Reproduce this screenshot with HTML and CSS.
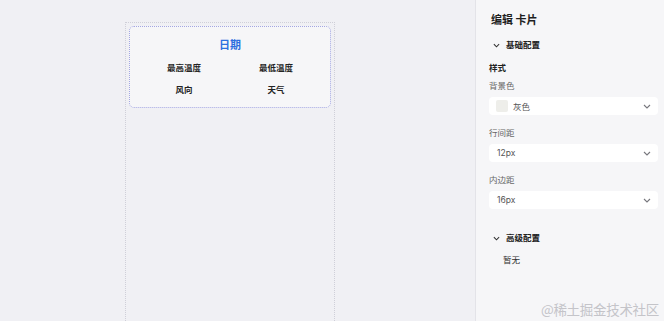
FILE: index.html
```html
<!DOCTYPE html>
<html lang="zh">
<head>
<meta charset="utf-8">
<link rel="stylesheet" href="styles.css">
</head>
<body>
<div class="page">
  <main class="stage">
    <div class="canvas">
      <div class="card">
        <div class="card-title">日期</div>
        <div class="card-grid">
          <span>最高温度</span>
          <span>最低温度</span>
          <span>风向</span>
          <span>天气</span>
        </div>
      </div>
    </div>
  </main>
  <aside class="panel">
    <h1 class="panel-title">编辑 卡片</h1>
    <div class="section-head">
      <svg class="chev" viewBox="0 0 8 5" width="7" height="5"><path d="M1 1 L4 4 L7 1" fill="none" stroke="#333" stroke-width="1.2"/></svg>
      <span>基础配置</span>
    </div>
    <div class="group-title">样式</div>
    <div class="field">
      <div class="label">背景色</div>
      <div class="select"><span class="swatch"></span><span class="value">灰色</span><svg class="sel-chev" viewBox="0 0 8 5" width="8" height="5"><path d="M1 1 L4 4 L7 1" fill="none" stroke="#77777d" stroke-width="1.1"/></svg></div>
    </div>
    <div class="field">
      <div class="label">行间距</div>
      <div class="select"><span class="value">12px</span><svg class="sel-chev" viewBox="0 0 8 5" width="8" height="5"><path d="M1 1 L4 4 L7 1" fill="none" stroke="#77777d" stroke-width="1.1"/></svg></div>
    </div>
    <div class="field">
      <div class="label">内边距</div>
      <div class="select"><span class="value">16px</span><svg class="sel-chev" viewBox="0 0 8 5" width="8" height="5"><path d="M1 1 L4 4 L7 1" fill="none" stroke="#77777d" stroke-width="1.1"/></svg></div>
    </div>
    <div class="section-head adv">
      <svg class="chev" viewBox="0 0 8 5" width="7" height="5"><path d="M1 1 L4 4 L7 1" fill="none" stroke="#333" stroke-width="1.2"/></svg>
      <span>高级配置</span>
    </div>
    <div class="empty">暂无</div>
  </aside>
  <div class="watermark">@稀土掘金技术社区</div>
</div>
</body>
</html>
```
FILE: styles.css
```css
* { box-sizing: border-box; margin: 0; padding: 0; }
html, body { width: 664px; height: 321px; overflow: hidden; }
body {
  background: #f0f0f4;
  font-family: "Inter", "Noto Sans CJK SC", sans-serif;
  color: #222;
}
.page {
  position: relative;
  display: flex;
  height: 321px;
  overflow: hidden;
}
.stage {
  flex: 1;
  padding: 22px 0 0 125px;
}
.canvas {
  width: 210px;
  height: 299px;
  border: 1px dotted #cfcfd8;
  border-bottom: none;
  padding: 3px 3px 0 3px;
}
.card {
  height: 82px;
  border: 1px dotted #a3a6e2;
  border-radius: 5px;
  background: #f6f6f8;
  padding: 11px 0 0 0;
  display: flex;
  flex-direction: column;
  align-items: center;
}
.card-title {
  font-size: 11px;
  line-height: 14px;
  font-weight: 700;
  color: #2d6fe0;
}
.card-grid {
  margin-top: 10px;
  display: grid;
  grid-template-columns: 92px 92px;
  row-gap: 10px;
  justify-items: center;
  font-size: 8.5px;
  line-height: 12px;
  font-weight: 700;
  color: #222;
}
.panel {
  width: 189px;
  flex: none;
  background: #f6f6f8;
  border-left: 1px solid #e3e3e8;
  padding: 12px 6px 0 13px;
}
.panel-title {
  margin-left: 2px;
  font-size: 11px;
  line-height: 16px;
  font-weight: 700;
  color: #1f1f1f;
}
.section-head {
  margin-top: 10px;
  display: flex;
  align-items: center;
  gap: 6px;
  padding-left: 4px;
  font-size: 8.5px;
  line-height: 14px;
  font-weight: 600;
  color: #222;
}
.section-head.adv { margin-top: 22px; }
.chev { display: block; }
.group-title {
  margin-top: 10px;
  font-size: 8.5px;
  line-height: 12px;
  font-weight: 700;
  color: #222;
}
.field { margin-top: 6px; }
.field + .field { margin-top: 12px; }
.label {
  font-size: 8.5px;
  line-height: 12px;
  color: #666;
}
.select {
  margin-top: 5px;
  height: 18px;
  background: #fff;
  border-radius: 4px;
  display: flex;
  align-items: center;
  padding: 0 7px 0 7px;
  font-size: 8.5px;
  color: #555;
}
.swatch {
  width: 12px;
  height: 12px;
  border-radius: 2px;
  background: #eeeeea;
  margin-right: 5px;
}
.value { flex: 1; padding-left: 1px; }
.select .swatch + .value { padding-left: 0; }
.sel-chev { display: block; }
.empty {
  margin-top: 9px;
  padding-left: 14px;
  font-size: 8.5px;
  line-height: 12px;
  color: #333;
}
.watermark {
  position: absolute;
  right: 5px;
  bottom: 3px;
  font-family: "Noto Sans CJK SC", serif;
  font-size: 13.5px;
  line-height: 18px;
  color: #c4c4c9;
  letter-spacing: -0.3px;
}
```
